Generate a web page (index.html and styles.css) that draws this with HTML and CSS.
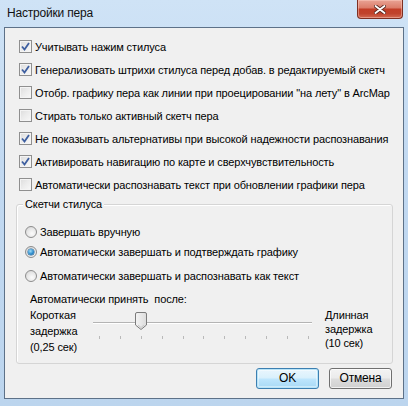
FILE: index.html
```html
<!DOCTYPE html>
<html lang="ru">
<head>
<meta charset="utf-8">
<title>Настройки пера</title>
<link rel="stylesheet" href="styles.css">
</head>
<body>
<div class="window">
  <div class="titlebar">
    <span class="title">Настройки пера</span>
    <span class="close">
      <svg width="12" height="9" viewBox="0 0 12 9"><path d="M1.5 1 L10.5 8 M10.5 1 L1.5 8" stroke="#5a2a22" stroke-width="3.6" stroke-linecap="round"/><path d="M1.5 1 L10.5 8 M10.5 1 L1.5 8" stroke="#ffffff" stroke-width="1.8" stroke-linecap="round"/></svg>
    </span>
  </div>
  <div class="client">
    <div class="checks">
      <div class="row"><span class="cb"><svg class="tick" width="9" height="9" viewBox="0 0 9 9"><path d="M1 4.5 L3.5 7.5 L8 1" fill="none" stroke="#3e5fa0" stroke-width="1.8"/></svg></span>Учитывать нажим стилуса</div>
      <div class="row"><span class="cb"><svg class="tick" width="9" height="9" viewBox="0 0 9 9"><path d="M1 4.5 L3.5 7.5 L8 1" fill="none" stroke="#3e5fa0" stroke-width="1.8"/></svg></span>Генерализовать штрихи стилуса перед добав. в редактируемый скетч</div>
      <div class="row"><span class="cb"></span>Отобр. графику пера как линии при проецировании "на лету" в ArcMap</div>
      <div class="row"><span class="cb"></span>Стирать только активный скетч пера</div>
      <div class="row"><span class="cb"><svg class="tick" width="9" height="9" viewBox="0 0 9 9"><path d="M1 4.5 L3.5 7.5 L8 1" fill="none" stroke="#3e5fa0" stroke-width="1.8"/></svg></span>Не показывать альтернативы при высокой надежности распознавания</div>
      <div class="row"><span class="cb"><svg class="tick" width="9" height="9" viewBox="0 0 9 9"><path d="M1 4.5 L3.5 7.5 L8 1" fill="none" stroke="#3e5fa0" stroke-width="1.8"/></svg></span>Активировать навигацию по карте и сверхчувствительность</div>
      <div class="row"><span class="cb"></span>Автоматически распознавать текст при обновлении графики пера</div>
    </div>

    <div class="group">
      <span class="legend">Скетчи стилуса</span>
      <div class="radio-row first"><span class="rb"></span>Завершать вручную</div>
      <div class="radio-row"><span class="rb on"><span class="dot"></span></span>Автоматически завершать и подтверждать графику</div>
      <div class="radio-row third"><span class="rb"></span>Автоматически завершать и распознавать как текст</div>
      <div class="accept">Автоматически принять&nbsp; после:</div>
      <div class="slider-row">
        <div class="slabel left">Короткая<br>задержка<br>(0,25 сек)</div>
        <div class="slider">
          <div class="track"></div>
          <div class="ticks"><i></i><i></i><i></i><i></i><i></i><i></i><i></i><i></i><i></i><i></i><i></i></div>
          <svg class="thumb" width="12" height="18" viewBox="0 0 12 18">
            <defs><linearGradient id="tg" x1="0" y1="0" x2="1" y2="0"><stop offset="0" stop-color="#f4f4f4"/><stop offset="1" stop-color="#dcdcdc"/></linearGradient></defs>
            <path d="M2 0.5 H10 Q11.5 0.5 11.5 2 V13 L6 17.5 L0.5 13 V2 Q0.5 0.5 2 0.5 Z" fill="url(#tg)" stroke="#7b7b7b"/>
            <path d="M3 13 L6 15.5 L9 13" fill="none" stroke="#c8c8c8"/>
          </svg>
        </div>
        <div class="slabel right">Длинная<br>задержка<br>(10 сек)</div>
      </div>
    </div>

    <div class="buttons">
      <span class="btn ok">OK</span>
      <span class="btn">Отмена</span>
    </div>
  </div>
</div>
</body>
</html>
```

FILE: styles.css
```css
* { box-sizing: border-box; }
html, body { margin: 0; padding: 0; }
body {
  width: 408px;
  height: 406px;
  overflow: hidden;
  font-family: "Liberation Sans", Arial, sans-serif;
  font-size: 11px;
  letter-spacing: -0.12px;
  color: #000;
}
.window {
  width: 408px;
  height: 406px;
  background: linear-gradient(180deg, #cfe3f6 0%, #c2d9f1 40%, #bcd5ee 100%);
  display: flex;
  flex-direction: column;
}
.titlebar {
  height: 27px;
  display: flex;
  align-items: flex-start;
  justify-content: space-between;
  flex: none;
}
.title {
  margin: 6px 0 0 7px;
  font-size: 12px;
  letter-spacing: -0.2px;
  line-height: 15px;
  color: #111;
}
.close {
  width: 46px;
  height: 19px;
  margin-right: 5px;
  border: 1px solid #7e2f22;
  border-top: none;
  border-radius: 0 0 4px 4px;
  background: linear-gradient(180deg, #e9a394 0%, #dc7e6b 42%, #c23e27 52%, #c0432c 75%, #d26a52 100%);
  box-shadow: inset 0 0 0 1px rgba(255,210,200,0.45);
  display: flex;
  align-items: center;
  justify-content: center;
}
.client {
  margin: 0 4px;
  height: 372px;
  border: 1px solid #5d7188;
  background: #f0f0f0;
  display: flex;
  flex-direction: column;
}
.checks {
  padding: 7px 0 0 14px;
}
.row {
  height: 23px;
  display: flex;
  align-items: center;
  white-space: nowrap;
}
.cb {
  width: 13px;
  height: 13px;
  margin-right: 3px;
  border: 1px solid #8f8f8f;
  background: linear-gradient(135deg, #dcdcdc 0%, #ececec 50%, #f8f8f8 100%);
  box-shadow: inset 0 0 0 1px #f4f4f4;
  display: flex;
  align-items: center;
  justify-content: center;
  flex: none;
}
.group {
  margin: 8px 10px 0 11px;
  height: 160px;
  border: 1px solid #d5d5d5;
  border-radius: 3px;
  box-shadow: inset 1px 1px 0 #ffffff;
  display: flex;
  flex-direction: column;
  align-items: flex-start;
  padding: 0 0 0 8px;
}
.legend {
  margin: -8px 0 0 -2px;
  padding: 0 2px;
  height: 15px;
  line-height: 15px;
  background: #f0f0f0;
}
.radio-row {
  height: 20px;
  display: flex;
  align-items: center;
  white-space: nowrap;
}
.radio-row.first { margin-top: 10px; }
.radio-row.third { margin-top: 4px; }
.rb {
  width: 12px;
  height: 12px;
  border-radius: 50%;
  border: 1px solid #8d8d8d;
  background: radial-gradient(circle at 60% 65%, #fbfbfb 0%, #e6e6e6 55%, #cfcfcf 100%);
  margin-right: 3px;
  display: flex;
  align-items: center;
  justify-content: center;
  flex: none;
}
.rb .dot {
  width: 6px;
  height: 6px;
  border-radius: 50%;
  background: radial-gradient(circle at 40% 35%, #9fdcf8 0%, #2d8ccc 55%, #165894 100%);
  box-shadow: 0 0 0 0.5px #1d5f92;
}
.accept {
  margin: 5px 0 0 5px;
  height: 16px;
  line-height: 16px;
  white-space: nowrap;
}
.slider-row {
  display: flex;
  margin-left: 5px;
}
.slabel {
  white-space: nowrap;
}
.slabel.left {
  width: 58px;
  line-height: 16px;
}
.slabel.right {
  margin-left: 7px;
  padding-top: 1px;
  line-height: 14px;
}
.slider {
  position: relative;
  width: 230px;
  height: 48px;
}
.track {
  position: absolute;
  left: 5px;
  top: 15px;
  width: 219px;
  height: 2px;
  border-top: 1px solid #b4b4b4;
  border-bottom: 1px solid #ffffff;
}
.ticks {
  position: absolute;
  left: 11px;
  top: 29px;
  width: 210px;
  display: flex;
  justify-content: space-between;
}
.ticks i {
  display: block;
  width: 1px;
  height: 3px;
  background: #b9b9b9;
}
.thumb {
  position: absolute;
  left: 47px;
  top: 5px;
}
.buttons {
  display: flex;
  justify-content: flex-end;
  gap: 10px;
  margin: 4px 11px 0 0;
}
.btn {
  width: 63px;
  height: 21px;
  border: 1px solid #707070;
  border-radius: 3px;
  background: linear-gradient(180deg, #f3f3f3 0%, #ebebeb 48%, #dddddd 52%, #d0d0d0 100%);
  box-shadow: inset 0 0 0 1px rgba(255,255,255,0.7);
  display: flex;
  align-items: center;
  justify-content: center;
  font-size: 12px;
  letter-spacing: -0.2px;
  line-height: 15px;
}
.btn.ok {
  border-color: #3c7fb1;
  background: linear-gradient(180deg, #eaf6fd 0%, #d9f0fc 48%, #bee6fd 52%, #a7d9f5 100%);
  box-shadow: inset 0 0 0 1px #b8e4f8, inset 0 0 0 2px rgba(255,255,255,0.4);
}
```
